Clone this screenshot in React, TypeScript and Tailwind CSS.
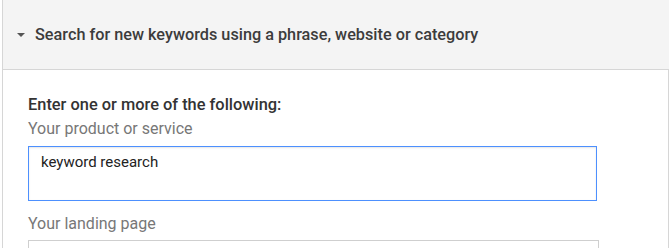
export default function App() {
  return (
    <div className="min-h-screen bg-white pl-[2px] font-['Roboto',sans-serif]">
      <section className="border-x border-[#d6d6d6]">
        {/* Collapsible header */}
        <div className="-mr-px flex h-[70px] items-center border-b border-[#d6d6d6] bg-[#f4f4f4] pl-[14px]">
          <svg viewBox="0 0 8 4" className="mr-[10px] h-[4px] w-[8px]" fill="#555">
            <path d="M0 0h8L4 4z" />
          </svg>
          <h2 className="text-[16.25px] font-medium leading-6 text-[#3c3c3c]">
            Search for new keywords using a phrase, website or category
          </h2>
        </div>

        {/* Form body */}
        <div className="pl-[25px] pt-[23px]">
          <p className="text-[16.4px] font-medium leading-6 text-[#333]">
            Enter one or more of the following:
          </p>
          <label className="block text-[16px] leading-6 text-[#777]">
            Your product or service
          </label>
          <div className="mt-[5px] h-[55px] w-[569px] border border-solid border-[color:#4d90fe] px-[12px] pt-[5px] text-[15px] leading-5 text-[#222] shadow-[inset_0_1px_2px_rgba(0,0,0,0.1)]">
            keyword research
          </div>
          <label className="mt-[11px] block text-[16px] leading-6 text-[#777]">
            Your landing page
          </label>
          <div className="mt-[4px] h-[40px] w-[571px] border border-solid border-[color:#cfcfcf]" />
        </div>
      </section>
    </div>
  );
}
